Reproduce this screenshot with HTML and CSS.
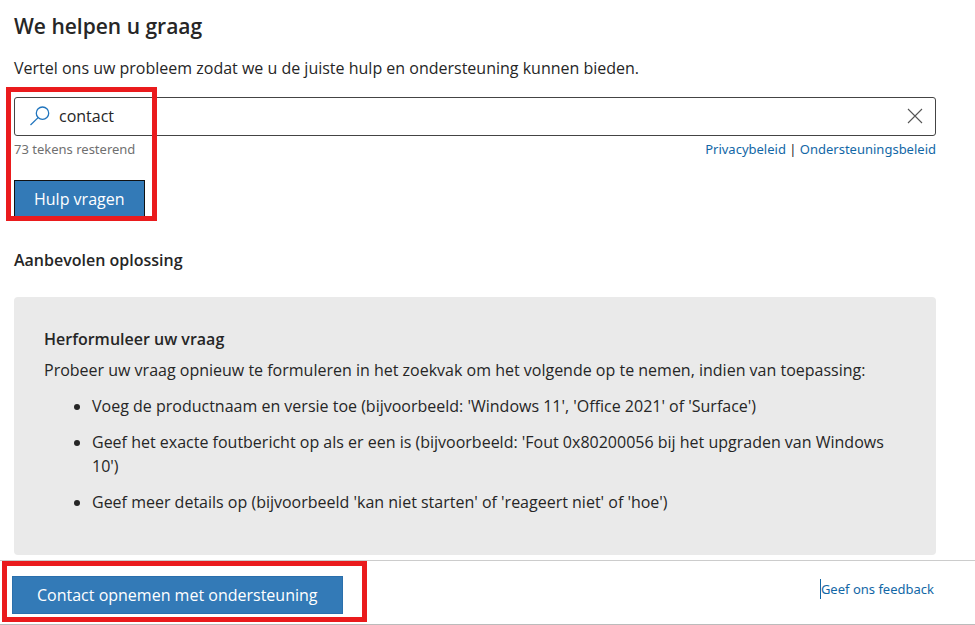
FILE: index.html
```html
<!DOCTYPE html>
<html lang="nl">
<head>
    <meta charset="UTF-8">
    <meta name="viewport" content="width=device-width, initial-scale=1.0">
    <title>We helpen u graag</title>
    <link rel="stylesheet" href="styles.css">
</head>
<body>

<main class="content">
    <h1>We helpen u graag</h1>
    <label class="intro" for="question">Vertel ons uw probleem zodat we u de juiste hulp en ondersteuning kunnen bieden.</label>

    <form class="ask-form">
        <div class="search-box">
            <svg class="search-icon" viewBox="0 0 20 20" aria-hidden="true">
                <circle cx="12.5" cy="7.2" r="6.2"/>
                <path d="M8.1 11.6L0.5 19"/>
            </svg>
            <input type="text" id="question" value="contact">
            <button type="button" class="clear-button" aria-label="Wissen">
                <svg viewBox="0 0 16 16" aria-hidden="true">
                    <path d="M1 1L15 15M15 1L1 15"/>
                </svg>
            </button>
        </div>
        <div class="search-info">
            <span class="remaining">73 tekens resterend</span>
            <span class="policies"><a href="#">Privacybeleid</a> | <a href="#">Ondersteuningsbeleid</a></span>
        </div>
        <button type="submit" class="button ask-button">Hulp vragen</button>
        <div class="marker ask-marker"></div>
    </form>

    <h2>Aanbevolen oplossing</h2>

    <section class="solution">
        <h3>Herformuleer uw vraag</h3>
        <p>Probeer uw vraag opnieuw te formuleren in het zoekvak om het volgende op te nemen, indien van toepassing:</p>
        <ul>
            <li>Voeg de productnaam en versie toe (bijvoorbeeld: 'Windows 11', 'Office 2021' of 'Surface')</li>
            <li>Geef het exacte foutbericht op als er een is (bijvoorbeeld: 'Fout 0x80200056 bij het upgraden van Windows 10')</li>
            <li>Geef meer details op (bijvoorbeeld 'kan niet starten' of 'reageert niet' of 'hoe')</li>
        </ul>
    </section>
</main>

<footer class="footer">
    <button type="button" class="button contact-button">Contact opnemen met ondersteuning</button>
    <a class="feedback" href="#">Geef ons feedback</a>
    <div class="marker contact-marker"></div>
</footer>

</body>
</html>
```
FILE: styles.css
```css
* {
    box-sizing: border-box;
}

body {
    margin: 0;
    background-color: #fff;
    color: #262626;
    font-family: "Segoe UI", "Open Sans", sans-serif;
    font-size: 16px;
    line-height: 24px;
}

h1, h2, h3, p, ul {
    margin: 0;
}

h1 {
    font-size: 21px;
    font-weight: 600;
    line-height: 32px;
    margin-bottom: 14px;
}

h2, h3 {
    font-size: 16px;
    font-weight: 600;
}

h2 {
    margin-top: 30px;
    margin-bottom: 25px;
}

a {
    color: #1267a6;
    text-decoration: none;
}

.content {
    padding: 10px 39px 5px 14px;
}

.intro {
    display: block;
    margin-bottom: 17px;
}

.ask-form {
    position: relative;
}

.search-box {
    display: flex;
    align-items: center;
    height: 39px;
    padding: 0 12px 2px 15px;
    border: 1px solid #444;
    border-radius: 3px;
}

.search-icon {
    width: 20px;
    height: 20px;
    margin-right: 9px;
    fill: none;
    stroke: #1f74bd;
    stroke-width: 1.3;
}

.search-box input {
    flex: 1;
    min-width: 0;
    padding: 0;
    border: 0;
    outline: 0;
    background: none;
    color: inherit;
    font: inherit;
}

.clear-button {
    display: flex;
    padding: 0;
    border: 0;
    background: none;
}

.clear-button svg {
    width: 16px;
    height: 16px;
    fill: none;
    stroke: #555;
    stroke-width: 1.1;
}

.search-info {
    display: flex;
    justify-content: space-between;
    margin-top: 3px;
    font-family: "Segoe UI", "Noto Sans", sans-serif;
    font-size: 13px;
    line-height: 20px;
}

.remaining {
    color: #707070;
}

.button {
    display: block;
    height: 38px;
    border: 1px solid #2a6fac;
    background-color: #337ab7;
    color: #fff;
    font: inherit;
}

.ask-button {
    margin-top: 21px;
    padding: 0 19px;
    border-color: #111;
}

.solution {
    padding: 30px 30px 41px;
    border-radius: 4px;
    background-color: #eaeaea;
}

.solution p {
    margin-top: 7px;
}

.solution ul {
    padding-left: 48px;
}

.solution li {
    margin-top: 12px;
}

.footer {
    position: relative;
    display: flex;
    justify-content: space-between;
    align-items: flex-start;
    padding: 15px 41px 10px 12px;
    border-top: 1px solid #ccc;
    border-bottom: 1px solid #bbb;
}

.contact-button {
    padding: 0 24px;
}

.feedback {
    margin-top: 3px;
    border-left: 1px solid #1267a6;
    font-family: "Segoe UI", "Noto Sans", sans-serif;
    font-size: 13px;
    line-height: 20px;
}

/* Red frames around the steps to follow */
.marker {
    position: absolute;
    border: 5px solid #ea1b1d;
    pointer-events: none;
}

.ask-marker {
    top: -10px;
    left: -8px;
    width: 151px;
    height: 134px;
}

.contact-marker {
    top: 0;
    left: 2px;
    width: 365px;
    height: 61px;
}
```
